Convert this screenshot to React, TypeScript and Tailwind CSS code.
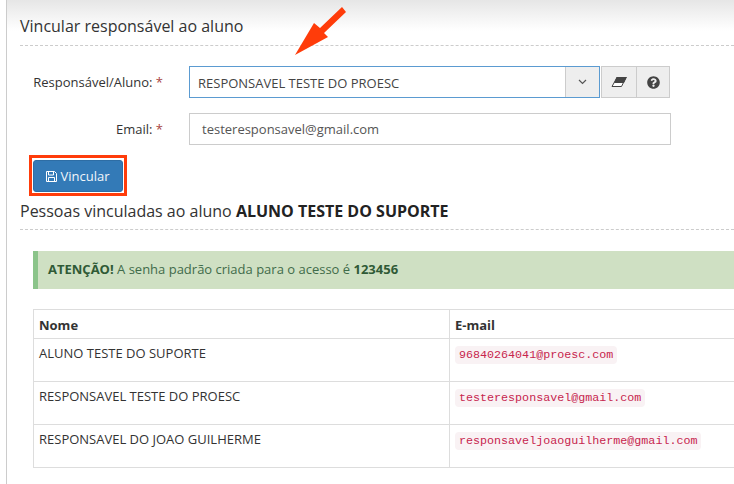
import React from "react";
import { FaQuestionCircle } from "react-icons/fa";

const rows = [
  { nome: "ALUNO TESTE DO SUPORTE", email: "96840264041@proesc.com" },
  { nome: "RESPONSAVEL TESTE DO PROESC", email: "testeresponsavel@gmail.com" },
  { nome: "RESPONSAVEL DO JOAO GUILHERME", email: "responsaveljoaoguilherme@gmail.com" },
];

function Eraser() {
  return (
    <svg width="16" height="10" viewBox="0 0 16 10">
      <path d="M6 0.5H15L10.5 9.5H1Z" fill="#fff" stroke="#444" strokeWidth="1" />
      <path d="M5.5 0H16L13 6H3Z" fill="#444" />
    </svg>
  );
}

function Floppy() {
  return (
    <svg width="11" height="11" viewBox="0 0 11 11" fill="none" stroke="#fff" strokeWidth="1">
      <path d="M0.5 0.5H8.5L10.5 2.5V10.5H0.5Z" />
      <path d="M2.5 0.5V4H7.5V0.5" />
      <path d="M2.5 10.5V6.5H8.5V10.5" />
    </svg>
  );
}

export default function App() {
  return (
    <div
      className="relative w-[734px] h-[484px] overflow-hidden bg-white text-[13px] text-[#333]"
      style={{ fontFamily: '"Open Sans", sans-serif' }}
    >
      <div className="ml-[6px] h-full border-l border-[#ccc] bg-[linear-gradient(#e6e6e6,#fdfdfd_28px,#ffffff_32px)] pl-[13px]">
        <h2 className="pt-[15px] h-[46px] border-b border-dashed border-[#ccc] text-[16px] leading-[22px] text-[#333]">
          Vincular responsável ao aluno
        </h2>

        <div className="mt-[20px] flex h-[32px] items-center">
          <label className="w-[144px] pr-[1px] text-right leading-[32px] -mt-[1px]">
            Responsável/Aluno: <span className="text-[#a94442]">*</span>
          </label>
          <div className="ml-[25px] flex h-[32px] w-[411px] border border-[#5b9bd1]">
            <div className="flex-1 pl-[8px] leading-[32px] text-[#444]">RESPONSAVEL TESTE DO PROESC</div>
            <div className="flex w-[34px] items-center justify-center border-l border-[#ccc] bg-[#eee]">
              <svg width="9" height="6" viewBox="0 0 9 6" fill="none" stroke="#555" strokeWidth="1.2">
                <path d="M1 1L4.5 4.5L8 1" />
              </svg>
            </div>
          </div>
          <div className="ml-px flex h-[32px] w-[36px] items-center justify-center border border-[#ccc] bg-[#eee]">
            <Eraser />
          </div>
          <div className="flex h-[32px] w-[33px] items-center justify-center border-y border-r border-[#ccc] bg-[#eee]">
            <FaQuestionCircle className="text-[13px] text-[#444]" />
          </div>
        </div>

        <div className="mt-[15px] flex h-[32px] items-center">
          <label className="w-[144px] pr-[1px] text-right leading-[32px] -mt-[1px]">
            Email: <span className="text-[#a94442]">*</span>
          </label>
          <div className="ml-[25px] h-[32px] w-[482px] border border-[#ccc] pl-[12px] leading-[31px] text-[#555]">
            testeresponsavel@gmail.com
          </div>
        </div>

        <div className="ml-[9px] mt-[10px] h-[41px] w-[98px] border-[3px] border-[#ff3c0a] p-px pt-[2px]">
          <button className="flex h-[32px] w-[90px] items-center justify-center gap-[3px] rounded-[3px] border border-[#2e6da4] bg-[#337ab7] pt-[1px] text-[13px] text-[#f2f6fa]">
            <Floppy />
            Vincular
          </button>
        </div>

        <h2 className="mt-[4px] h-[30px] border-b border-dashed border-[#ccc] text-[16px] leading-[22px] text-[#333]">
          Pessoas vinculadas ao aluno <b className="text-[#222]">ALUNO TESTE DO SUPORTE</b>
        </h2>

        <div className="ml-[13px] mt-[21px] flex h-[38px] w-[720px] items-center border-l-[5px] border-[#8bc48a] bg-[#cfe0c3] pl-[10px] text-[#3f6b4a]">
          <span>
            <b className="text-[#2f5a36]">ATENÇÃO!</b> A senha padrão criada para o acesso é{" "}
            <b className="text-[#2f5a36]">123456</b>
          </span>
        </div>

        <table className="ml-[13px] mt-[20px] w-[760px] table-fixed border-collapse border border-[#ddd]">
          <colgroup>
            <col className="w-[416px]" />
            <col />
          </colgroup>
          <thead>
            <tr className="h-[29px]">
              <th className="border border-[#ddd] px-[5px] pt-[3px] text-left font-bold">Nome</th>
              <th className="border border-[#ddd] px-[5px] pt-[3px] text-left font-bold">E-mail</th>
            </tr>
          </thead>
          <tbody>
            {rows.map((r) => (
              <tr key={r.email} className="h-[43px]">
                <td className="border border-[#ddd] px-[5px] pt-[3px] align-top leading-[22px]">{r.nome}</td>
                <td className="border border-[#ddd] px-[5px] pt-[5px] align-top leading-[18px]">
                  <code
                    className="rounded-[4px] bg-[#f9f2f4] px-[4px] py-[2px] text-[11.7px] text-[#c7254e]"
                    style={{ fontFamily: '"Liberation Mono", monospace' }}
                  >
                    {r.email}
                  </code>
                </td>
              </tr>
            ))}
          </tbody>
        </table>
      </div>

      <svg className="absolute left-[290px] top-[4px]" width="60" height="54" viewBox="0 0 60 54">
        <path d="M5 51L24 19L30 24L52 3L56 8L34 29L38 33Z" fill="#ff3c0a" />
      </svg>
    </div>
  );
}
